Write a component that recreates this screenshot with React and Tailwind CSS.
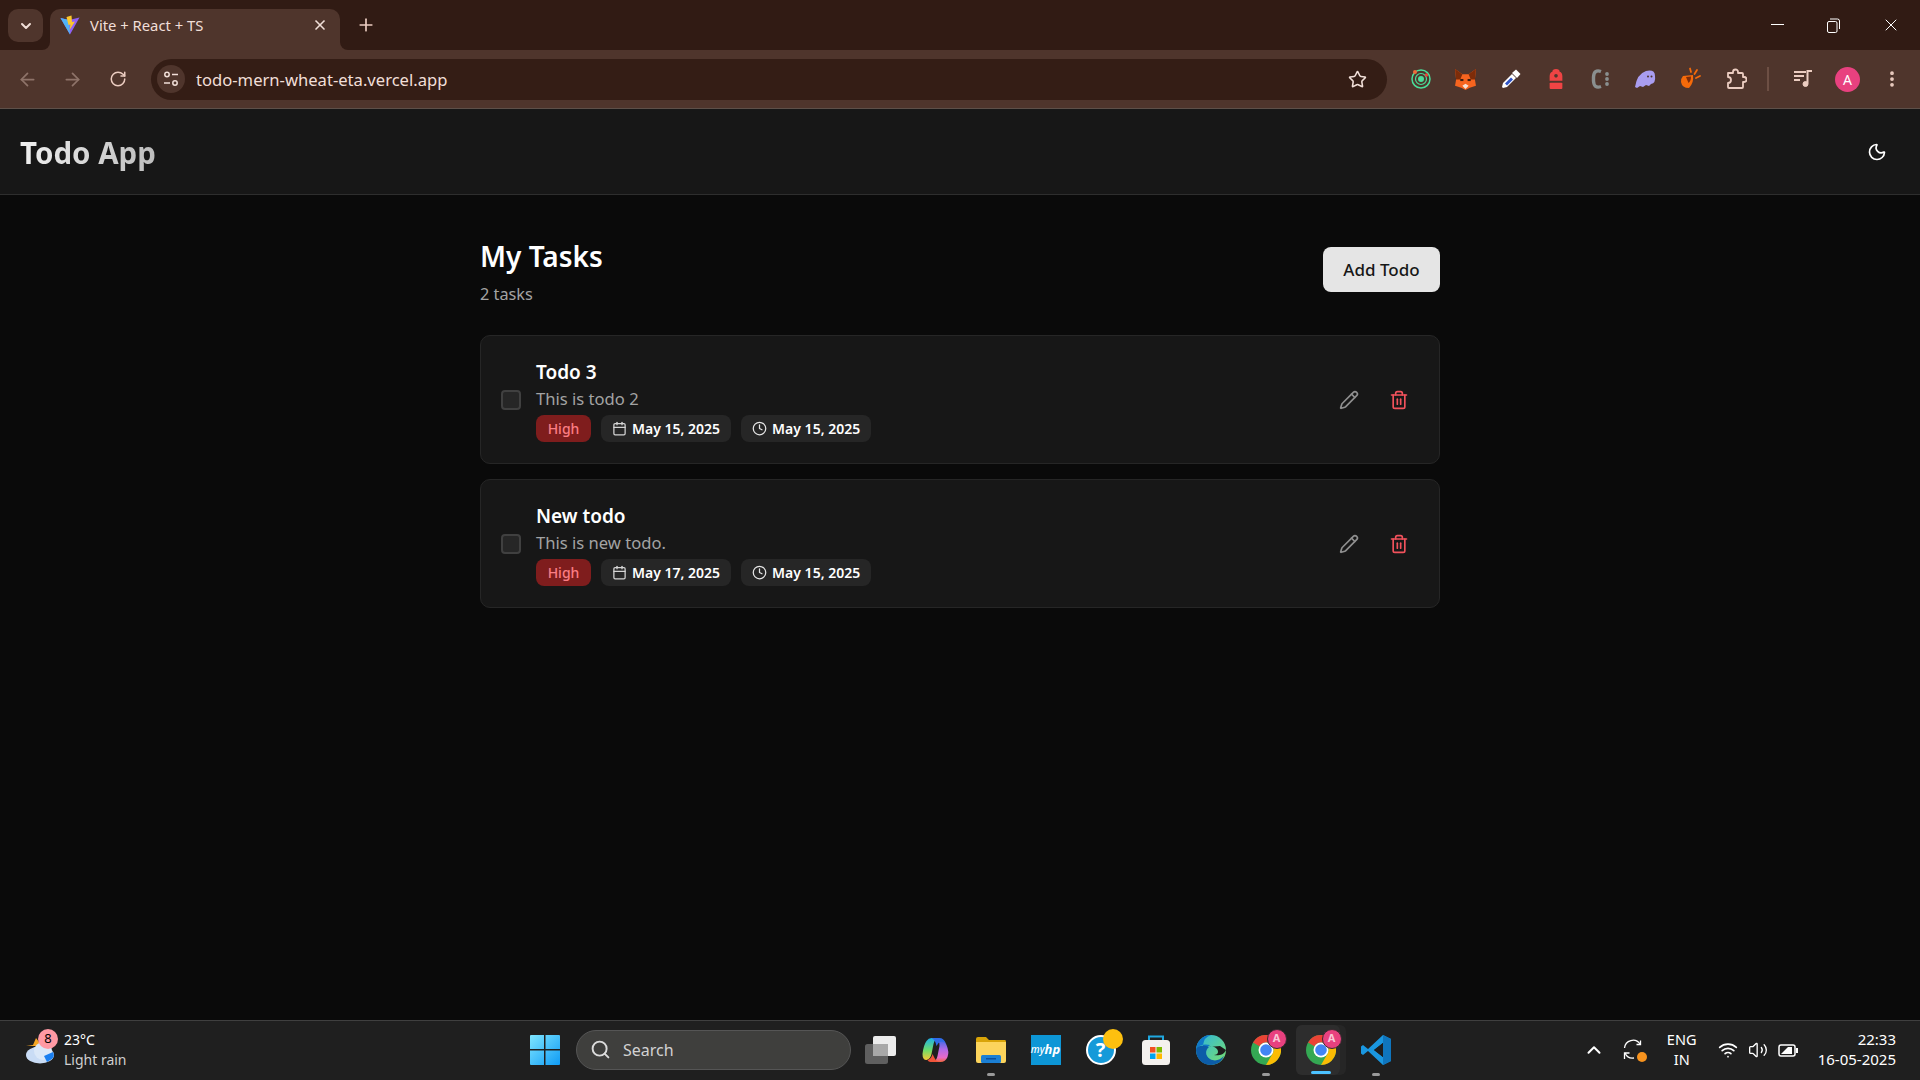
import React from "react";
import {
  ArrowLeft,
  ArrowRight,
  Calendar,
  ChevronDown,
  ChevronUp,
  Clock,
  EllipsisVertical,
  Moon,
  Pencil,
  Plus,
  RotateCw,
  Search,
  Star,
  Trash2,
  Volume2,
  Wifi,
  X,
} from "lucide-react";

const UI_FONT = "font-['Noto_Sans','Open_Sans',sans-serif]";

const todos = [
  { id: 1, title: "Todo 3", description: "This is todo 2", due: "May 15, 2025", created: "May 15, 2025" },
  { id: 2, title: "New todo", description: "This is new todo.", due: "May 17, 2025", created: "May 15, 2025" },
];

function ViteLogo() {
  return (
    <svg width="20" height="20" viewBox="0 0 20 20">
      <path d="M0.5 3 L9 5 L19.5 2.5 L10 19.5 Z" fill="#8f62f5" />
      <path d="M0.5 3 L9 5 L10 19.5 Z" fill="#4fb4f7" />
      <path d="M11.5 0.5 L6.5 2 L8.5 10 L10.5 9.5 L9.5 15 L15 6.5 L12 7 Z" fill="#fdc72c" />
    </svg>
  );
}

function TabBar() {
  return (
    <div className="h-[50px] bg-[#311b14] flex items-end relative shrink-0">
      <div className="absolute left-[8px] top-[9px] w-[35px] h-[33px] rounded-[10px] bg-[#4f352c] flex items-center justify-center">
        <ChevronDown size={16} strokeWidth={3} className="text-[#f1dfd8]" />
      </div>
      <div className="ml-[50px] w-[290px] h-[41px] bg-[#4f352c] rounded-t-[10px] flex items-center pl-[10px] pr-[12px] pb-[9px] relative">
        <div className="absolute left-[-8px] bottom-0 w-[8px] h-[8px] bg-[#4f352c]">
          <div className="w-full h-full bg-[#311b14] rounded-br-[8px]"></div>
        </div>
        <div className="absolute right-[-8px] bottom-0 w-[8px] h-[8px] bg-[#4f352c]">
          <div className="w-full h-full bg-[#311b14] rounded-bl-[8px]"></div>
        </div>
        <ViteLogo />
        <span className="ml-[10px] text-[14.8px] text-[#f1dfd8] flex-1">Vite + React + TS</span>
        <X size={16} strokeWidth={2.5} className="text-[#f1dfd8]" />
      </div>
      <Plus size={20} strokeWidth={2} className="text-[#eccdc1] ml-[16px] mb-[15px]" />
      <div className="ml-auto flex items-center h-full text-white">
        <div className="w-[56px] mr-[1px] flex justify-center">
          <div className="w-[13px] h-[1px] bg-white mb-[2px]"></div>
        </div>
        <div className="w-[55px] mr-[1px] flex justify-center">
          <svg width="13" height="15" viewBox="0 0 13 15" fill="none" stroke="white" strokeWidth="1">
            <rect x="0.5" y="3.5" width="9.5" height="11" rx="1.5" />
            <path d="M3 1 H10.5 A2 2 0 0 1 12.5 3 V11" />
          </svg>
        </div>
        <div className="w-[58px] flex justify-center">
          <X size={20} strokeWidth={1.2} />
        </div>
      </div>
    </div>
  );
}

function SiteControls() {
  return (
    <svg width="16" height="16" viewBox="0 0 16 16" fill="none" stroke="#f1dfd8" strokeWidth="1.5">
      <circle cx="4" cy="3.5" r="2.2" />
      <path d="M9 3.5 H15" />
      <circle cx="12" cy="12" r="2.2" />
      <path d="M1 12 H7" />
    </svg>
  );
}

function ExtensionIcons() {
  return (
    <>
      <div className="w-[45px] flex justify-center">
        <svg width="22" height="22" viewBox="0 0 22 22" fill="none">
          <circle cx="11" cy="11" r="9" stroke="#4ade9a" strokeWidth="1.5" />
          <circle cx="11" cy="11" r="5.5" stroke="#4ade9a" strokeWidth="1.2" />
          <circle cx="11" cy="11" r="3" fill="#4ade9a" />
          <circle cx="5" cy="4" r="2" fill="#ef6a3a" />
          <circle cx="16.5" cy="7" r="1.7" fill="#e5463a" />
        </svg>
      </div>
      <div className="w-[45px] flex justify-center">
        <svg width="23" height="23" viewBox="0 0 22 22">
          <path d="M1 1 L8 6 H14 L21 1 L20 11 L21 17 L15 19 L11 21 L7 19 L1 17 L2 11 Z" fill="#f6641f" />
          <path d="M1 1 L8 6 L6 11 L2 11 Z M21 1 L14 6 L16 11 L20 11 Z" fill="#7d2c09" />
          <path d="M8 17 L11 15 L14 17 L11 20 Z" fill="#f5e1d5" />
          <rect x="6" y="10.5" width="3" height="2" fill="#3a1d10" />
          <rect x="13" y="10.5" width="3" height="2" fill="#3a1d10" />
        </svg>
      </div>
      <div className="w-[45px] flex justify-center">
        <svg width="22" height="22" viewBox="0 0 22 22">
          <path d="M3 15 L12 6 L16 10 L7 19 L3 20 L2 19 Z" fill="white" />
          <path d="M5 15.5 L11 9.5 L13 11.5 L7 17.5 Z" fill="#2f55c8" />
          <path d="M12 5 L16 1.5 L20.5 6 L17 10 Z" fill="white" />
        </svg>
      </div>
      <div className="w-[45px] flex justify-center">
        <svg width="20" height="24" viewBox="0 0 22 24">
          <path d="M7 4 Q7 1 11 1 Q15 1 15 4 Q18 5 18 9 V14 H4 V9 Q4 5 7 4 Z" fill="#ef4444" />
          <circle cx="11" cy="8.5" r="2" fill="#4f352c" />
          <rect x="4" y="16" width="14" height="7" rx="1" fill="#ef4444" />
        </svg>
      </div>
      <div className="w-[45px] flex justify-center">
        <svg width="22" height="22" viewBox="0 0 22 22" fill="none">
          <path d="M11 3.5 Q4 1 3.5 9 V13 Q4 21 11 18.5" stroke="#8a8f8f" strokeWidth="3.4" />
          <circle cx="17" cy="6" r="1.9" fill="#8a8f8f" />
          <circle cx="17" cy="11" r="1.9" fill="#8a8f8f" />
          <circle cx="17" cy="16" r="1.9" fill="#8a8f8f" />
        </svg>
      </div>
      <div className="w-[45px] flex justify-center">
        <svg width="24" height="22" viewBox="0 0 24 22">
          <path d="M1 19 Q3 6 12 3 Q21 1 21 8 Q22 15 17 16 L15 18 L12 17 L9 19 L6 18 L3 20 Z" fill="#a99df0" />
          <circle cx="14" cy="8.5" r="1" fill="#4f352c" />
          <circle cx="17.5" cy="8.5" r="1" fill="#4f352c" />
        </svg>
      </div>
      <div className="w-[45px] flex justify-center">
        <svg width="24" height="24" viewBox="0 0 24 24" fill="none">
          <path d="M4 9 L14 8 Q15 16 10 21 Q3 21 2 15 Q2 11 4 9 Z" fill="#f56a0a" />
          <path d="M7 10 L12 9.5 Q12 14 9.5 16 Z" fill="#7d2c09" />
          <path d="M12 5 L11 1.5 M15.5 7 L18 3 M17 11 L21 9" stroke="#f56a0a" strokeWidth="1.8" strokeLinecap="round" />
        </svg>
      </div>
      <div className="w-[45px] flex justify-center">
        <svg width="22" height="22" viewBox="0 0 22 22" fill="none" stroke="#eccdc1" strokeWidth="1.8" strokeLinejoin="round">
          <path d="M3 5 H8 V4 A2.5 2.5 0 0 1 13 4 V5 H17 A1 1 0 0 1 18 6 V9 H19 A2.5 2.5 0 0 1 19 14 H18 V19 A1 1 0 0 1 17 20 H4 A1 1 0 0 1 3 19 V15 A3 3 0 0 0 3 9 Z" />
        </svg>
      </div>
    </>
  );
}

function MusicIcon() {
  return (
    <svg width="20" height="20" viewBox="0 0 20 20" fill="none" stroke="#eccdc1">
      <path d="M1 3 H13 M1 7 H11 M1 11 H7" strokeWidth="1.8" />
      <path d="M14.5 14.5 V2 H19" strokeWidth="2" />
      <circle cx="12.5" cy="15" r="2.5" fill="#eccdc1" />
    </svg>
  );
}

function Toolbar() {
  return (
    <div className="h-[59px] bg-[#4f352c] border-b border-[#5e5049] flex items-center shrink-0">
      <div className="w-[55px] flex justify-center">
        <ArrowLeft size={21} strokeWidth={2} className="text-[#8e7369]" />
      </div>
      <div className="w-[35px] flex justify-center">
        <ArrowRight size={21} strokeWidth={2} className="text-[#8e7369]" />
      </div>
      <div className="w-[56px] flex justify-center">
        <RotateCw size={18} strokeWidth={2} className="text-[#eccdc1]" />
      </div>
      <div className="ml-[5px] w-[1236px] h-[41px] rounded-full bg-[#341d15] flex items-center pl-[6px] pr-[20px]">
        <div className="w-[28px] h-[28px] rounded-full bg-[#4f352c] flex items-center justify-center">
          <SiteControls />
        </div>
        <span className="ml-[11px] text-[16.6px] text-[#f1dfd8] flex-1 translate-y-[1px]">todo-mern-wheat-eta.vercel.app</span>
        <Star size={19} strokeWidth={2} className="text-[#f1dfd8]" />
      </div>
      <div className="ml-[11px] flex items-center">
        <ExtensionIcons />
        <div className="ml-[9px] w-[2px] h-[24px] bg-[#6d4f44]"></div>
        <div className="ml-[24px]">
          <MusicIcon />
        </div>
        <div className="ml-[22px] w-[25px] h-[25px] rounded-full bg-[#e8417f] text-white text-[14px] flex items-center justify-center">
          A
        </div>
        <EllipsisVertical size={20} strokeWidth={2.5} className="text-[#eccdc1] ml-[22px]" />
      </div>
    </div>
  );
}

function TodoCard({ todo }) {
  return (
    <div className="bg-[#171717] border border-[#262626] rounded-[10px] px-5 h-[129px] flex items-center">
      <div className="w-5 h-5 rounded bg-[#262626] border-2 border-[#404040] shrink-0"></div>
      <div className="ml-[15px] flex-1">
        <h3 className="text-[19px] leading-[28px] font-semibold text-white translate-y-[1px]">{todo.title}</h3>
        <p className="text-[16.6px] leading-[24px] text-[#a3a3a3] mt-[2px]">{todo.description}</p>
        <div className="flex items-center gap-[10px] mt-[4px]">
          <span className="h-[27px] w-[55px] justify-center rounded-[8px] bg-[#7f1d1d] text-[#fb7d84] text-[14px] font-medium flex items-center">
            High
          </span>
          <span className="h-[27px] pl-[11px] pr-[11px] rounded-[8px] bg-[#262626] text-white text-[14px] font-semibold flex items-center gap-[5px]">
            <Calendar size={15} strokeWidth={2} className="text-[#d4d4d4]" />
            {todo.due}
          </span>
          <span className="h-[27px] pl-[11px] pr-[11px] rounded-[8px] bg-[#262626] text-white text-[14px] font-semibold flex items-center gap-[5px]">
            <Clock size={15} strokeWidth={2} className="text-[#e5e5e5]" />
            {todo.created}
          </span>
        </div>
      </div>
      <Pencil size={20} strokeWidth={2} className="text-[#8f8f8f] mr-[30px]" />
      <Trash2 size={20} strokeWidth={2} className="text-[#f2525c] mr-[10px]" />
    </div>
  );
}

function ChromeIcon() {
  return (
    <div className="relative w-[30px] h-[30px] rounded-full">
      <svg width="30" height="30" viewBox="0 0 30 30">
        <circle cx="15" cy="15" r="15" fill="#34a853" />
        <path d="M28 7.5 A15 15 0 0 1 15 30 L21.5 18.7 A7.5 7.5 0 0 0 21.5 11 Z" fill="#fbbc04" />
        <path d="M2 7.5 A15 15 0 0 1 28 7.5 L15 7.5 A7.5 7.5 0 0 0 8.5 11.2 Z" fill="#ea4335" />
        <circle cx="15" cy="15" r="7.5" fill="white" />
        <circle cx="15" cy="15" r="5.8" fill="#4285f4" />
      </svg>
      <div className="absolute -top-[6px] -right-[6px] w-[20px] h-[20px] rounded-full bg-[#e8417f] border border-[#3a2a30] text-[#f8c8d8] text-[11px] font-bold flex items-center justify-center">
        A
      </div>
    </div>
  );
}

function TaskbarApps() {
  return (
    <>
      <div className="w-[55px] h-[48px] flex items-center justify-center">
        <svg width="32" height="28" viewBox="0 0 32 28">
          <rect x="0" y="8" width="23" height="20" rx="2.5" fill="#5f5f5f" />
          <rect x="8" y="0" width="23" height="20" rx="2" fill="#ececec" />
          <rect x="8" y="8" width="15" height="12" fill="#a8a8a8" />
        </svg>
      </div>
      <div className="w-[55px] h-[48px] flex items-center justify-center">
        <svg width="29" height="26" viewBox="0 0 28 26">
          <defs>
            <linearGradient id="copA" x1="0" y1="0" x2="0" y2="1">
              <stop offset="0" stopColor="#1db0e8" />
              <stop offset="0.55" stopColor="#6ddc6a" />
              <stop offset="1" stopColor="#f9c834" />
            </linearGradient>
            <linearGradient id="copB" x1="0" y1="0" x2="0" y2="1">
              <stop offset="0" stopColor="#2f6be8" />
              <stop offset="0.45" stopColor="#b06ae8" />
              <stop offset="0.8" stopColor="#e86ac8" />
              <stop offset="1" stopColor="#f0663a" />
            </linearGradient>
          </defs>
          <path d="M10 1 H17 Q13 2 12 7 L10 17 Q9 22 5 23 Q1 23 1 17 Q2 8 5 4 Q7 1 10 1 Z" fill="url(#copA)" />
          <path d="M18 2 Q23 2 25 8 Q28 15 26 20 Q24 25 19 25 H11 Q15 24 16 19 L18 9 Q18 5 16 3 Z" fill="url(#copB)" />
          <path d="M10 1 H18 Q22 1 24 6 Q20 3 17 6 L15 9 Q14 3 10 1 Z" fill="#2f6be8" />
          <path d="M6 23 Q10 22 11 17 L13 21 Q15 25 19 25 H9 Q7 25 6 23 Z" fill="#f0553a" />
        </svg>
      </div>
      <div className="w-[55px] h-[48px] flex flex-col items-center justify-center relative">
        <svg width="30" height="27" viewBox="0 0 30 27">
          <path d="M0 3 Q0 1 2 1 H10 L13 4 H29 Q30 4 30 6 V10 H0 Z" fill="#d9a408" />
          <path d="M0 6 H30 V25 Q30 27 28 27 H2 Q0 27 0 25 Z" fill="#fcd45c" />
          <rect x="5" y="19" width="20" height="8" rx="1.5" fill="#1b7fd4" />
          <rect x="10" y="22" width="10" height="1.5" fill="#0a4f9e" />
        </svg>
        <div className="absolute bottom-[-2px] w-[8px] h-[3px] rounded-full bg-[#9a9a9a]"></div>
      </div>
      <div className="w-[55px] h-[48px] flex items-center justify-center">
        <div className="w-[30px] h-[30px] bg-[#0d96d6] text-white text-[10px] italic font-medium flex items-center justify-center">
          my<span className="font-bold text-[13px]">hp</span>
        </div>
      </div>
      <div className="w-[55px] h-[48px] flex items-center justify-center">
        <div className="relative w-[30px] h-[30px] rounded-full bg-[#159ad9] border-2 border-white text-white text-[20px] font-bold flex items-center justify-center">
          ?
          <div className="absolute -top-[8px] -right-[9px] w-[20px] h-[20px] rounded-full bg-[#fdc00f]"></div>
        </div>
      </div>
      <div className="w-[55px] h-[48px] flex items-center justify-center">
        <svg width="30" height="30" viewBox="0 0 30 30">
          <path d="M8 6 V1.5 H22 V6" fill="none" stroke="#1fa8e0" strokeWidth="2" />
          <rect x="1" y="5" width="28" height="25" rx="3.5" fill="#f4f1ee" />
          <rect x="9" y="12" width="5.5" height="5.5" fill="#f25022" />
          <rect x="15.5" y="12" width="5.5" height="5.5" fill="#7fba00" />
          <rect x="9" y="18.5" width="5.5" height="5.5" fill="#00a4ef" />
          <rect x="15.5" y="18.5" width="5.5" height="5.5" fill="#ffb900" />
        </svg>
      </div>
      <div className="w-[55px] h-[48px] flex items-center justify-center">
        <svg width="30" height="30" viewBox="0 0 30 30">
          <defs>
            <linearGradient id="edgeA" x1="0" y1="0" x2="1" y2="1">
              <stop offset="0" stopColor="#2bb5e0" />
              <stop offset="1" stopColor="#7ce06a" />
            </linearGradient>
          </defs>
          <circle cx="15" cy="15" r="15" fill="url(#edgeA)" />
          <path d="M0 15 A15 15 0 0 1 15 0 Q8 2 7 10 Q4 20 12 27 Q20 31 26 25 Q15 30 10 20 Q8 14 14 10 Q4 8 0 15 Z" fill="#0f78c8" />
          <path d="M0 15 C0 24 7 30 15 30 C21 30 26 26 28 21 C24 25 19 27 14 24 C9 21 9 15 13 12 C8 10 1 10 0 15 Z" fill="#0c5ca8" />
          <path d="M13 12 C18 11 22 13 22 17 C22 19 20 20 18 20 C22 21 28 20 30 15 L24 11 Z" fill="#1d1d1d" />
        </svg>
      </div>
      <div className="w-[55px] h-[48px] flex items-center justify-center relative">
        <ChromeIcon />
        <div className="absolute bottom-[-2px] w-[8px] h-[3px] rounded-full bg-[#9a9a9a]"></div>
      </div>
      <div className="w-[55px] h-[48px] flex items-center justify-center">
        <div className="relative w-[50px] h-[50px] shrink-0 rounded-[6px] bg-[#262626] flex items-center justify-center">
          <div className="absolute left-0 top-0 w-[44px] h-full rounded-[6px] bg-[#2d2d2d]"></div>
          <div className="relative">
            <ChromeIcon />
          </div>
          <div className="absolute bottom-[1px] left-[15px] w-[20px] h-[3px] rounded-full bg-[#4cc2ff]"></div>
        </div>
      </div>
      <div className="w-[55px] h-[48px] flex items-center justify-center relative">
        <svg width="30" height="30" viewBox="0 0 30 30">
          <path d="M22 0 L30 4 V26 L22 30 L7 16 L2 20 L0 18.5 V11.5 L2 10 L7 14 Z M22 8 L13 15 L22 22 Z" fill="#1a97e0" />
          <path d="M22 0 L30 4 V26 L22 30 Z" fill="#0f75bd" />
          <path d="M22 8 V22 L13 15 Z" fill="#1e1e1e" />
        </svg>
        <div className="absolute bottom-[-2px] w-[8px] h-[3px] rounded-full bg-[#9a9a9a]"></div>
      </div>
    </>
  );
}

function WeatherIcon() {
  return (
    <div className="relative w-[36px] h-[36px]">
      <svg width="36" height="36" viewBox="0 0 36 36" className="absolute left-0 top-0">
        <path d="M2 14 L9 13 L12 6 L18 14 Z" fill="#f5a623" />
        <ellipse cx="16" cy="23" rx="14" ry="8.5" fill="#c9dcf5" />
        <circle cx="19" cy="19" r="9" fill="#dbe8f8" />
        <path d="M20 24 L29 20 Q31 24 28 27 L23 30 Z" fill="#1a7ff0" />
      </svg>
      <div className="absolute right-[2px] top-[-3px] w-[20px] h-[20px] rounded-full bg-[#ff99a4] text-black text-[13px] flex items-center justify-center">
        8
      </div>
    </div>
  );
}

function SyncIcon() {
  return (
    <svg width="22" height="22" viewBox="0 0 22 22" fill="none" stroke="white" strokeWidth="1.3">
      <path d="M2.5 9 A8.5 8.5 0 0 1 18 5" />
      <path d="M18.5 1.5 V5.5 H14.5" />
      <path d="M3 14 A8.5 8.5 0 0 0 12 19" />
      <path d="M2.5 20 V14 H7.5" />
    </svg>
  );
}

function Taskbar() {
  return (
    <div className="h-[60px] pb-[2px] bg-[#1f1f1f] border-t border-[#3f3f3f] flex items-center shrink-0 text-white text-[14px] relative">
      <div className="w-[530px] pl-[24px] flex items-center shrink-0">
        <WeatherIcon />
        <div className="ml-[4px] leading-[20px]">
          <div className="text-[14px]">23°C</div>
          <div className="text-[14px] text-[#cfcfcf]">Light rain</div>
        </div>
      </div>
      <svg width="30" height="30" viewBox="0 0 30 30" className="shrink-0">
        <defs>
          <linearGradient id="winA" x1="0" y1="0" x2="1" y2="1">
            <stop offset="0" stopColor="#7fe6ff" />
            <stop offset="1" stopColor="#0f9bf5" />
          </linearGradient>
        </defs>
        <path d="M0 1 Q0 0 1 0 H14 V14 H0 Z M15.5 0 H29 Q30 0 30 1 V14 H15.5 Z M0 15.5 H14 V30 H1 Q0 30 0 29 Z M15.5 15.5 H30 V29 Q30 30 29 30 H15.5 Z" fill="url(#winA)" />
      </svg>
      <div className="ml-[16px] w-[275px] h-[40px] rounded-full bg-[#3f3f3d] border border-[#555] flex items-center pl-[13px] shrink-0">
        <Search size={21} strokeWidth={2.2} className="text-[#dcdcdc]" />
        <span className="ml-[12px] text-[16px] text-[#d2d2d2]">Search</span>
      </div>
      <div className="ml-[2px] flex items-center">
        <TaskbarApps />
      </div>
      <div className="ml-auto flex items-center pr-[24px]">
        <ChevronUp size={22} strokeWidth={2.2} className="text-white mr-[17px]" />
        <div className="relative mr-[21px]">
          <SyncIcon />
          <div className="absolute right-[-3px] bottom-[-1px] w-[10px] h-[10px] rounded-full bg-[#f7931e]"></div>
        </div>
        <div className="w-[34px] text-center text-[14.5px] leading-[20px] mr-[19px] -mt-[2px]">
          <div>ENG</div>
          <div>IN</div>
        </div>
        <Wifi size={20} strokeWidth={2} className="mr-[10px]" />
        <Volume2 size={20} strokeWidth={1.6} className="mr-[10px]" />
        <svg width="20" height="16" viewBox="0 0 20 16" className="mr-[20px]">
          <rect x="1" y="3" width="16" height="11" rx="2" fill="none" stroke="white" strokeWidth="1.5" />
          <rect x="18" y="6" width="2" height="5" fill="white" />
          <path d="M3 12 L10 5 H14 V12 Z" fill="white" />
        </svg>
        <div className="text-right text-[15px] leading-[20px] -mt-[2px]">
          <div>22:33</div>
          <div>16-05-2025</div>
        </div>
      </div>
    </div>
  );
}

export default function App() {
  return (
    <div className={`h-screen w-full flex flex-col overflow-hidden bg-[#0a0a0a] ${UI_FONT}`}>
      <TabBar />
      <Toolbar />
      <header className="h-[86px] bg-[#171717] border-b border-[#2e2e2e] flex items-center justify-between px-5 shrink-0">
        <h1 className="text-[29.5px] font-bold mt-[4px] bg-gradient-to-r from-[#f0f0f0] to-[#bdbdbd] bg-clip-text text-transparent">Todo App</h1>
        <Moon size={20} strokeWidth={2} className="text-white mr-[13px]" />
      </header>
      <main className="flex-1 w-[960px] mx-auto pt-[47px]">
        <div className="flex items-start justify-between mb-[29px]">
          <div>
            <h2 className="text-[28px] leading-[36px] font-semibold text-white -mt-[4px]">My Tasks</h2>
            <p className="text-[16.3px] leading-[24px] text-[#a3a3a3] mt-[8px]">2 tasks</p>
          </div>
          <button className="mt-[5px] w-[117px] h-[45px] pt-[1px] rounded-[8px] bg-[#e5e5e5] text-[#171717] text-[17px] font-medium">
            Add Todo
          </button>
        </div>
        <div className="flex flex-col gap-[15px]">
          {todos.map((todo) => (
            <TodoCard key={todo.id} todo={todo} />
          ))}
        </div>
      </main>
      <Taskbar />
    </div>
  );
}
